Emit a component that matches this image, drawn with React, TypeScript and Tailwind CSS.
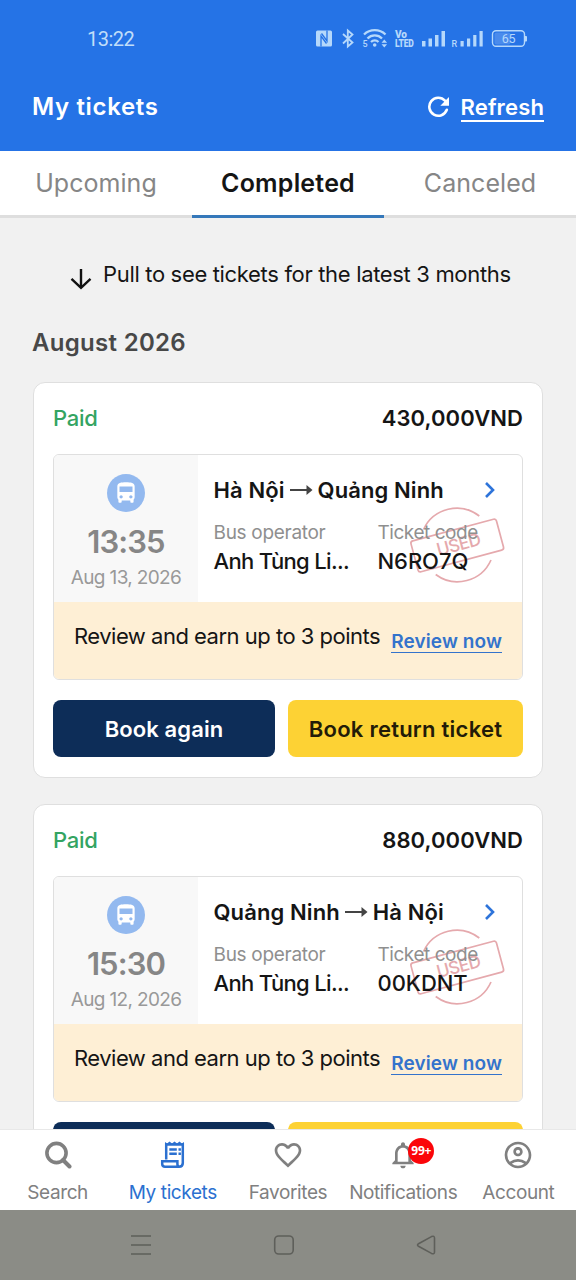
import React from 'react';
import {
  MdDirectionsBus,
  MdFavoriteBorder,
  MdNotificationsNone,
  MdOutlineAccountCircle,
} from 'react-icons/md';

interface Ticket {
  price: string;
  time: string;
  date: string;
  from: string;
  to: string;
  operator: string;
  code: string;
}

const tickets: Ticket[] = [
  {
    price: '430,000VND',
    time: '13:35',
    date: 'Aug 13, 2026',
    from: 'Hà Nội',
    to: 'Quảng Ninh',
    operator: 'Anh Tùng Li...',
    code: 'N6RO7Q',
  },
  {
    price: '880,000VND',
    time: '15:30',
    date: 'Aug 12, 2026',
    from: 'Quảng Ninh',
    to: 'Hà Nội',
    operator: 'Anh Tùng Li...',
    code: '00KDNT',
  },
];

const StatusIcons: React.FC = () => (
  <svg width="214" height="24" viewBox="315 27 214 24" fill="#b5d8fb">
    {/* nfc */}
    <rect x="316" y="30.500" width="16" height="16" rx="1.500" />
    <path d="M321 46.500V36l5.500 7.500M327 30.500V41l-5.500-7.500" fill="none" stroke="#2573e6" strokeWidth="1.300" />
    {/* bluetooth */}
    <path d="M343 34l9.500 8.500-4.700 4V30.500l4.700 4L343 43.500" fill="none" stroke="#b5d8fb" strokeWidth="1.800" />
    {/* wifi */}
    <g fill="none" stroke="#b5d8fb" strokeWidth="2.300">
      <path d="M364 34.500a15.500 15.500 0 0 1 21.500 0" />
      <path d="M367.500 38.500a10 10 0 0 1 14.500 0" />
      <path d="M371 42a5.500 5.500 0 0 1 7.500 0" />
    </g>
    <circle cx="374.700" cy="45" r="1.800" />
    <path d="M381.500 42.800l2.800-3.200 2.800 3.200zM381.500 44.300l2.800 3.200 2.800-3.200z" />
    <text x="362.500" y="47.200" fontSize="9" fontFamily="Roboto, sans-serif" fontWeight="500">5</text>
    <text x="395" y="37.800" fontSize="10" fontFamily="Roboto, sans-serif" fontWeight="900" textLength="11.500" lengthAdjust="spacingAndGlyphs">Vo</text>
    <text x="395" y="46.700" fontSize="11" fontFamily="Roboto, sans-serif" fontWeight="900" textLength="18.500" lengthAdjust="spacingAndGlyphs">LTED</text>
    {/* signal bars */}
    <path d="M422 41h3.500v5.500H422zM428.500 38.500h3.500v8h-3.500zM435 35h3.500v11.500H435zM441.500 31h3.500v15.500h-3.500z" />
    <text x="451.500" y="47" fontSize="9" fontFamily="Roboto, sans-serif" fontWeight="500">R</text>
    <path d="M460.500 41h3.200v5.500h-3.200zM467 38.500h3.200v8H467zM473.200 35h3.200v11.500h-3.200zM479.500 31h3.200v15.500h-3.200z" />
    {/* battery */}
    <rect x="492.500" y="30.700" width="32" height="15.500" rx="3.500" fill="none" stroke="#b5d8fb" strokeWidth="1.400" />
    <path d="M525 36h1.200q.8 0 .8 1v3.500q0 1-.8 1H525z" />
    <rect x="494.500" y="32.500" width="16" height="12" rx="2" fill="#4a8bec" />
    <text x="508.500" y="43" fontSize="12.500" fontFamily="Roboto, sans-serif" textAnchor="middle">65</text>
  </svg>
);

const Header: React.FC = () => (
  <header className="h-[151px] bg-[#2573e6] text-white">
    <div className="flex h-[78px] items-center justify-between pl-[87px] pr-[47px]">
      <span className="font-[Roboto] text-[20px] tracking-[-0.5px] text-[#c0def9]">13:22</span>
      <StatusIcons />
    </div>
    <div className="flex h-14 items-center justify-between pl-[32px] pr-8 pt-[2px]">
      <h1 className="text-[24px] font-semibold tracking-[0.65px]">My tickets</h1>
      <div className="flex items-center gap-[11px]">
        <svg className="-mt-[3px]" width="23" height="24" viewBox="0 0 23 24">
          <path d="M19.800 15.800A9 9 0 1 1 18 6.700" fill="none" stroke="white" strokeWidth="2.600" strokeLinecap="round" />
          <path d="M22 3v8.700h-8.700z" fill="white" />
        </svg>
        <span className="mt-px border-b-2 border-white text-[22px] font-semibold leading-[26px] tracking-[0.15px]">Refresh</span>
      </div>
    </div>
  </header>
);

const Tabs: React.FC = () => (
  <nav className="grid h-[67px] shrink-0 grid-cols-3 bg-white text-center text-[25px] leading-[64px] tracking-[0.05px]">
    <div className="border-b-[3px] border-[#dedede] text-[#868686]">Upcoming</div>
    <div className="border-b-[3px] border-[#3578ba] font-semibold tracking-[0.2px] text-[#151515]">Completed</div>
    <div className="border-b-[3px] border-[#dedede] text-[#868686]">Canceled</div>
  </nav>
);

const RouteArrow: React.FC = () => (
  <svg className="mx-[5px]" width="23" height="12" viewBox="0 0 23 12">
    <path d="M0 6h18" stroke="#444" strokeWidth="2.200" />
    <path d="M16.500 1l6 5-6 5z" fill="#444" />
  </svg>
);

const UsedStamp: React.FC = () => (
  <svg className="absolute left-[211px] top-[50px]" width="98" height="80" viewBox="409 504.500 98 80" fill="none" stroke="#e5a9ad" strokeWidth="1.700">
    <path d="M423.500 529a36.600 36.600 0 0 1 55.800-13.500" />
    <path d="M435.700 574a36.600 36.600 0 0 0 55.300-14.500" />
    <rect x="413" y="529" width="88.500" height="32" rx="2.500" transform="rotate(-15 457.200 545)" />
    <text x="458.500" y="550" fontSize="17.500" fontWeight="500" textAnchor="middle" textLength="45" fill="#e5a9ad" stroke="none" transform="rotate(-15 458.500 543.500)">
      USED
    </text>
  </svg>
);

const TicketCard: React.FC<{ ticket: Ticket }> = ({ ticket }) => (
  <article className="h-[396px] shrink-0 rounded-xl border-[1.5px] border-[#dfdfdf] bg-white px-[19px]">
    <div className="flex h-[71px] items-center justify-between text-[22px] font-medium">
      <span className="text-[#34a462]">Paid</span>
      <span className="font-semibold tracking-[0.05px] text-[#151515]">{ticket.price}</span>
    </div>
    <div className="h-[226px] overflow-hidden rounded-md border-[1.5px] border-[#dfdfdf]">
      <div className="flex h-[147px]">
        <div className="flex w-36 flex-col items-center bg-[#f8f8f8] pt-[19px]">
          <div className="flex h-[38px] w-[38px] items-center justify-center rounded-full bg-[#93b9ef]">
            <MdDirectionsBus size={26} color="white" />
          </div>
          <div className="mt-[11px] text-[31px] font-semibold leading-[38px] tracking-[-0.9px] text-[#868686]">{ticket.time}</div>
          <div className="mt-[4px] whitespace-nowrap text-[19px] leading-[25px] tracking-[-0.65px] text-[#999]">{ticket.date}</div>
        </div>
        <div className="relative flex-1 pl-[15.5px] text-[#151515]">
          <UsedStamp />
          <div className="relative mt-[20px] flex h-[30px] items-center whitespace-nowrap text-[22px] font-semibold tracking-[0.1px]">
            {ticket.from}
            <RouteArrow />
            {ticket.to}
            <svg className="ml-auto mr-[26px]" width="12" height="18" viewBox="0 0 12 18">
              <path d="M2 2l7 7-7 7" fill="none" stroke="#2e74da" strokeWidth="2.600" />
            </svg>
          </div>
          <div className="relative mt-[16px] flex whitespace-nowrap">
            <div className="w-[164px]">
              <div className="text-[19px] leading-[24px] text-[#8f8f8f]">Bus operator</div>
              <div className="mt-[1px] text-[22px] font-medium leading-[30px] tracking-[-0.65px]">{ticket.operator}</div>
            </div>
            <div>
              <div className="text-[19px] leading-[24px] tracking-[-0.45px] text-[#8f8f8f]">Ticket code</div>
              <div className="mt-[1px] text-[22px] font-medium leading-[30px] tracking-[-0.05px]">{ticket.code}</div>
            </div>
          </div>
        </div>
      </div>
      <div className="flex h-[78px] justify-between whitespace-nowrap bg-[#feefd5] pl-5 pr-5 pt-[20px] text-[#151515]">
        <span className="text-[22px] leading-[28px] tracking-[-0.5px]">Review and earn up to 3 points</span>
        <span className="mt-[9px] h-[22px] border-b-[1.5px] border-[#3473cc] text-[19px] font-semibold leading-[22px] tracking-[0.1px] text-[#3473cc]">
          Review now
        </span>
      </div>
    </div>
    <div className="mt-5 flex gap-[13px] text-[22px] font-semibold">
      <button className="h-[57px] w-[222px] rounded-lg bg-[#0d2d58] pt-px tracking-[0.1px] text-white">Book again</button>
      <button className="h-[57px] flex-1 whitespace-nowrap rounded-lg bg-[#fdd234] pt-px tracking-[0.25px] text-[#231b08]">Book return ticket</button>
    </div>
  </article>
);

const navItems = [
  {
    label: 'Search',
    icon: (
      <svg width="28" height="28" viewBox="0 0 28 28" fill="none" stroke="currentColor">
        <circle cx="12.500" cy="12" r="9.600" strokeWidth="3.600" />
        <path d="M19 19l6.500 6.500" strokeWidth="4" strokeLinecap="round" />
      </svg>
    ),
  },
  {
    label: 'My tickets',
    icon: (
      <svg width="26" height="28" viewBox="0 0 26 28" fill="none" stroke="currentColor">
        <path d="M6.200 18.500V3.500h16.600V22q0 3.700-3.700 3.700H5Q2.200 25.700 2.200 23v-2.800h15.200V23q0 2.700 2 2.700" strokeWidth="2.500" />
        <path d="M5 3.500V1l2.200 1.500L9.500.5l2.500 2 2.500-2 2.500 2 2.500-2 2.300 2L24 1v2.500z" fill="currentColor" stroke="none" />
        <path d="M9.300 8.500h7.500M18.500 8.500h2.400M9.300 12.700h7.500M18.500 12.700h2.400" strokeWidth="2.400" />
      </svg>
    ),
    active: true,
  },
  { label: 'Favorites', icon: <MdFavoriteBorder size={32} /> },
  { label: 'Notifications', icon: <MdNotificationsNone size={32} />, badge: '99+' },
  { label: 'Account', icon: <MdOutlineAccountCircle size={32} /> },
];

const BottomNav: React.FC = () => (
  <nav className="grid h-[81px] shrink-0 grid-cols-5 border-t border-[#e8e8e8] bg-white">
    {navItems.map((item) => (
      <div key={item.label} className={`flex flex-col items-center ${item.active ? 'text-[#2b70d0]' : 'text-[#808080]'}`}>
        <div className="relative mt-[9px] flex h-8 w-8 items-center justify-center">
          {item.icon}
          {item.badge && (
            <span className="absolute left-[21px] top-[-1px] flex h-[26px] w-[26px] items-center justify-center rounded-full bg-[#fb0509] font-['Open_Sans'] text-[12px] font-bold text-white">
              {item.badge}
            </span>
          )}
        </div>
        <span className="mt-[10px] whitespace-nowrap text-[19px] leading-6 tracking-[-0.4px]">{item.label}</span>
      </div>
    ))}
  </nav>
);

const SystemBar: React.FC = () => (
  <div className="flex h-[70px] shrink-0 items-center justify-between bg-[#8b8c86] pl-[130px] pr-[140px]">
    <svg width="22" height="22" viewBox="0 0 22 22" stroke="#5e5f5a" strokeWidth="1.700">
      <path d="M1 2h20M1 11h20M1 20h20" />
    </svg>
    <svg width="22" height="22" viewBox="0 0 22 22" fill="none" stroke="#5e5f5a" strokeWidth="1.600">
      <rect x="1.700" y="2" width="18.500" height="18" rx="4" />
    </svg>
    <svg width="20" height="22" viewBox="0 0 20 22" fill="none" stroke="#5e5f5a" strokeWidth="1.600" strokeLinejoin="round">
      <path d="M2.500 9.800L15.500 2.600q3-1.200 3 1.400v14q0 2.600-3 1.400L2.500 12.200q-2-1.200 0-2.400z" />
    </svg>
  </div>
);

export default function App() {
  return (
    <div className="flex h-[1280px] w-[576px] flex-col overflow-hidden bg-[#f1f1f1] font-[Inter,sans-serif] tracking-[-0.3px]">
      <Header />
      <Tabs />
      <main className="flex min-h-0 flex-1 flex-col overflow-hidden px-[33px]">
        <div className="mt-[40px] flex h-8 shrink-0 items-center whitespace-nowrap pl-[37px] text-[22px] tracking-[-0.33px] text-[#151515]">
          <svg className="mr-[11px] mt-[9px]" width="22" height="24" viewBox="0 0 22 24" fill="none" stroke="#111" strokeWidth="2.400">
            <path d="M11 2v18.500M1.500 11.800l9.500 9 9.500-9" />
          </svg>
          Pull to see tickets for the latest 3 months
        </div>
        <h2 className="-ml-px mt-[37px] h-8 shrink-0 text-[24px] font-semibold leading-8 tracking-[0.3px] text-[#484848]">August 2026</h2>
        <div className="mt-[23px] flex flex-col gap-[26px]">
          {tickets.map((ticket) => (
            <TicketCard key={ticket.code} ticket={ticket} />
          ))}
        </div>
      </main>
      <BottomNav />
      <SystemBar />
    </div>
  );
}
